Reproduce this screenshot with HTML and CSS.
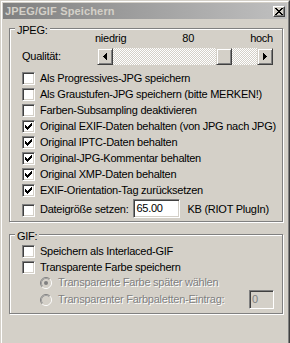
FILE: index.html
```html
<!DOCTYPE html>
<html lang="de">
<head>
<meta charset="utf-8">
<title>JPEG/GIF Speichern</title>
<link rel="stylesheet" href="styles.css">
</head>
<body>
<div class="window">
  <div class="window-inner">
    <div class="titlebar">
      <span class="title">JPEG/GIF Speichern</span>
      <span class="close"><svg class="close-x" width="8" height="7" viewBox="0 0 8 7"><path d="M0 0h2v1h-2zM6 0h2v1h-2zM1 1h2v1h-2zM5 1h2v1h-2zM2 2h4v1h-4zM3 3h2v1h-2zM2 4h4v1h-4zM1 5h2v1h-2zM5 5h2v1h-2zM0 6h2v1h-2zM6 6h2v1h-2z"/></svg></span>
    </div>
    <div class="client">
      <div class="group group-jpeg">
        <span class="group-title">JPEG:</span>
        <div class="quality">
          <div class="scale"><span>niedrig</span><span>80</span><span>hoch</span></div>
          <span class="qlabel">Qualität:</span>
          <div class="scrollbar">
            <span class="sb-btn"><svg width="4" height="7" viewBox="0 0 4 7"><path d="M3 0h1v7h-1zM2 1h1v5h-1zM1 2h1v3h-1zM0 3h1v1h-1z"/></svg></span>
            <span class="sb-track"><span class="sb-thumb" style="margin-left:103px"></span></span>
            <span class="sb-btn"><svg width="4" height="7" viewBox="0 0 4 7"><path d="M0 0h1v7h-1zM1 1h1v5h-1zM2 2h1v3h-1zM3 3h1v1h-1z"/></svg></span>
          </div>
        </div>
        <div class="checks">
          <div class="check-row"><span class="cb"></span><span>Als Progressives-JPG speichern</span></div>
          <div class="check-row"><span class="cb"></span><span>Als Graustufen-JPG speichern (bitte MERKEN!)</span></div>
          <div class="check-row"><span class="cb"></span><span>Farben-Subsampling deaktivieren</span></div>
          <div class="check-row"><span class="cb checked"><svg width="13" height="13" viewBox="0 0 13 13"><path d="M9 3h1v1h-1zM8 4h2v1h-2zM3 5h1v1h-1zM7 5h3v1h-3zM3 6h2v1h-2zM6 6h3v1h-3zM3 7h5v1h-5zM4 8h3v1h-3zM5 9h1v1h-1z"/></svg></span><span>Original EXIF-Daten behalten (von JPG nach JPG)</span></div>
          <div class="check-row"><span class="cb checked"><svg width="13" height="13" viewBox="0 0 13 13"><path d="M9 3h1v1h-1zM8 4h2v1h-2zM3 5h1v1h-1zM7 5h3v1h-3zM3 6h2v1h-2zM6 6h3v1h-3zM3 7h5v1h-5zM4 8h3v1h-3zM5 9h1v1h-1z"/></svg></span><span>Original IPTC-Daten behalten</span></div>
          <div class="check-row"><span class="cb checked"><svg width="13" height="13" viewBox="0 0 13 13"><path d="M9 3h1v1h-1zM8 4h2v1h-2zM3 5h1v1h-1zM7 5h3v1h-3zM3 6h2v1h-2zM6 6h3v1h-3zM3 7h5v1h-5zM4 8h3v1h-3zM5 9h1v1h-1z"/></svg></span><span>Original-JPG-Kommentar behalten</span></div>
          <div class="check-row"><span class="cb checked"><svg width="13" height="13" viewBox="0 0 13 13"><path d="M9 3h1v1h-1zM8 4h2v1h-2zM3 5h1v1h-1zM7 5h3v1h-3zM3 6h2v1h-2zM6 6h3v1h-3zM3 7h5v1h-5zM4 8h3v1h-3zM5 9h1v1h-1z"/></svg></span><span>Original XMP-Daten behalten</span></div>
          <div class="check-row"><span class="cb checked"><svg width="13" height="13" viewBox="0 0 13 13"><path d="M9 3h1v1h-1zM8 4h2v1h-2zM3 5h1v1h-1zM7 5h3v1h-3zM3 6h2v1h-2zM6 6h3v1h-3zM3 7h5v1h-5zM4 8h3v1h-3zM5 9h1v1h-1z"/></svg></span><span>EXIF-Orientation-Tag zurücksetzen</span></div>
          <div class="check-row size-row"><span class="cb cb-size"></span><span>Dateigröße setzen:</span><span class="field">65.00</span><span class="unit">KB (RIOT PlugIn)</span></div>
        </div>
      </div>
      <div class="group group-gif">
        <span class="group-title">GIF:</span>
        <div class="check-row"><span class="cb"></span><span>Speichern als Interlaced-GIF</span></div>
        <div class="check-row"><span class="cb"></span><span>Transparente Farbe speichern</span></div>
        <div class="radio-row radio-first">
          <svg class="radio" width="12" height="12" viewBox="0 0 12 12"><circle cx="6" cy="6" r="5" fill="#d4d0c8"/><path d="M2.11 9.89A5.5 5.5 0 0 1 9.89 2.11" fill="none" stroke="#808080"/><path d="M9.89 2.11A5.5 5.5 0 0 1 2.11 9.89" fill="none" stroke="#fff"/><path d="M2.82 9.18A4.5 4.5 0 0 1 9.18 2.82" fill="none" stroke="#a0a0a0"/><path d="M9.18 2.82A4.5 4.5 0 0 1 2.82 9.18" fill="none" stroke="#d4d0c8"/><circle cx="6" cy="6" r="2" fill="#808080"/></svg>
          <span class="disabled">Transparente Farbe später wählen</span>
        </div>
        <div class="radio-row radio-second">
          <svg class="radio" width="12" height="12" viewBox="0 0 12 12"><circle cx="6" cy="6" r="5" fill="#d4d0c8"/><path d="M2.11 9.89A5.5 5.5 0 0 1 9.89 2.11" fill="none" stroke="#808080"/><path d="M9.89 2.11A5.5 5.5 0 0 1 2.11 9.89" fill="none" stroke="#fff"/><path d="M2.82 9.18A4.5 4.5 0 0 1 9.18 2.82" fill="none" stroke="#a0a0a0"/><path d="M9.18 2.82A4.5 4.5 0 0 1 2.82 9.18" fill="none" stroke="#d4d0c8"/></svg>
          <span class="disabled">Transparenter Farbpaletten-Eintrag:</span>
          <span class="field field-disabled">0</span>
        </div>
      </div>
    </div>
  </div>
</div>
</body>
</html>
```

FILE: styles.css
```css
* { box-sizing: border-box; }
html, body { margin: 0; padding: 0; }
body {
  width: 290px;
  height: 343px;
  overflow: hidden;
  background: #d4d0c8;
  font-family: "Liberation Sans", Arial, sans-serif;
  font-size: 11px;
  letter-spacing: -0.25px;
  color: #000;
}
.window {
  width: 290px;
  height: 343px;
  border: 1px solid;
  border-bottom: 0;
  border-color: #d4d0c8 #404040 #404040 #d4d0c8;
  background: #d4d0c8;
}
.window-inner {
  height: 100%;
  border: 1px solid;
  border-bottom: 0;
  border-color: #fff #808080 #808080 #fff;
  padding: 1px 1px 0 1px;
}
.titlebar {
  height: 16px;
  display: flex;
  align-items: center;
  justify-content: space-between;
  padding: 0 2px 0 2px;
  background: linear-gradient(to right, #808080, #c0c0c0);
}
.title {
  font-weight: bold;
  font-size: 11px;
  line-height: 16px;
  letter-spacing: 0.15px;
  color: #d4d0c8;
  white-space: nowrap;
}
.close {
  width: 12px;
  height: 11px;
  display: flex;
  align-items: center;
  justify-content: center;
  background: #d4d0c8;
  border: 1px solid;
  border-color: #fff #404040 #404040 #fff;
  box-shadow: inset -1px -1px 0 #808080;
}
.close-x { display: block; fill: #000; shape-rendering: crispEdges; }
.client {
  padding: 9px 4px 0 6px;
}
.group {
  position: relative;
  border: 1px solid #808080;
  box-shadow: inset 1px 1px 0 #fff, 1px 1px 0 #fff;
}
.group-title {
  position: absolute;
  top: -5px;
  left: 5px;
  padding: 0 2px;
  line-height: 13px;
  background: #d4d0c8;
}
.group-jpeg { padding: 3px 9px 2px 12px; }
.group-gif { margin-top: 12px; padding: 8px 8px 4px 12px; }

.quality {
  display: grid;
  grid-template-columns: 73px 178px;
  grid-template-rows: 13px 17px;
  row-gap: 3px;
}
.scale {
  grid-column: 2;
  grid-row: 1;
  display: flex;
  justify-content: space-between;
  line-height: 13px;
}
.qlabel {
  grid-column: 1;
  grid-row: 2;
  align-self: center;
  line-height: 13px;
}
.scrollbar {
  grid-column: 2;
  grid-row: 2;
  margin-left: 2px;
  width: 176px;
  height: 17px;
  display: flex;
}
.sb-btn, .sb-thumb {
  width: 16px;
  height: 17px;
  flex: none;
  display: flex;
  align-items: center;
  justify-content: center;
  background: #d4d0c8;
  border: 1px solid;
  border-color: #d4d0c8 #404040 #404040 #d4d0c8;
  box-shadow: inset 1px 1px 0 #fff, inset -1px -1px 0 #808080;
}
.sb-btn svg { display: block; fill: #000; shape-rendering: crispEdges; }
.sb-track {
  flex: 1;
  display: flex;
  background: repeating-conic-gradient(#fff 0 25%, #d4d0c8 0 50%) 0 0 / 2px 2px;
}

.checks { margin-top: 5px; }
.check-row {
  height: 16px;
  display: flex;
  align-items: center;
  gap: 5px;
  line-height: 16px;
  white-space: nowrap;
}
.cb {
  width: 13px;
  height: 13px;
  flex: none;
  background: #fff;
  border: 1px solid;
  border-color: #808080 #fff #fff #808080;
  box-shadow: inset 1px 1px 0 #404040, inset -1px -1px 0 #d4d0c8;
  position: relative;
}
.cb svg {
  position: absolute;
  left: -1px;
  top: -1px;
  display: block;
  fill: #000;
  shape-rendering: crispEdges;
}
.size-row { height: 21px; }
.cb-size { margin-top: 3px; }
.field {
  width: 47px;
  height: 19px;
  flex: none;
  background: #fff;
  border: 1px solid;
  border-color: #808080 #fff #fff #808080;
  box-shadow: inset 1px 1px 0 #404040, inset -1px -1px 0 #d4d0c8;
  padding: 0 2px;
  line-height: 17px;
}
.unit { margin-left: 2px; }

.radio-row {
  display: flex;
  align-items: center;
  padding-left: 18px;
  white-space: nowrap;
  line-height: 15px;
}
.radio-first { height: 15px; }
.radio-second { height: 19px; }
.radio { display: block; flex: none; margin-right: 6px; }
.disabled {
  color: #808080;
  text-shadow: 1px 1px 0 #fff;
}
.field-disabled {
  width: 25px;
  margin-left: auto;
  background: #d4d0c8;
  color: #808080;
}
```
